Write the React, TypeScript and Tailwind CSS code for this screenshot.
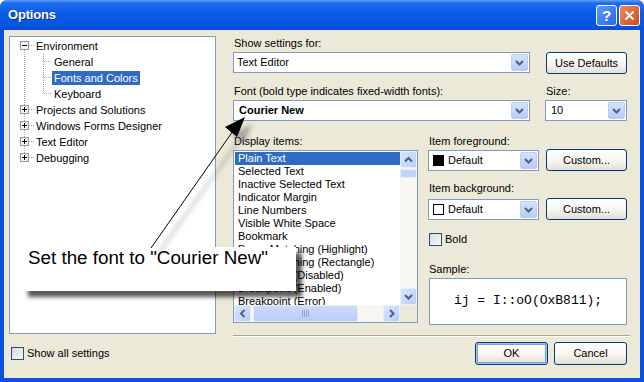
import type { ReactNode } from "react";

const items = [
  "Plain Text",
  "Selected Text",
  "Inactive Selected Text",
  "Indicator Margin",
  "Line Numbers",
  "Visible White Space",
  "Bookmark",
  "Brace Matching (Highlight)",
  "Brace Matching (Rectangle)",
  "Breakpoint (Disabled)",
  "Breakpoint (Enabled)",
  "Breakpoint (Error)",
];

// dotted tree connectors + expand box, one per row
function TreeLines({ kind, first, last, open }: { kind: "root" | "child"; first?: boolean; last?: boolean; open?: boolean }) {
  if (kind === "root") {
    return (
      <svg width="25" height="16" className="shrink-0">
        {!first && <line x1="14.5" y1="0" x2="14.5" y2="3" stroke="#A0A0A0" strokeDasharray="1 1" />}
        {!last && <line x1="14.5" y1="12" x2="14.5" y2="16" stroke="#A0A0A0" strokeDasharray="1 1" />}
        <line x1="19" y1="7.5" x2="25" y2="7.5" stroke="#A0A0A0" strokeDasharray="1 1" />
        <rect x="10.5" y="3.5" width="8" height="8" fill="#F4F4F0" stroke="#919B9C" />
        <line x1="12" y1="7.5" x2="17" y2="7.5" stroke="#000" />
        {!open && <line x1="14.5" y1="5" x2="14.5" y2="10" stroke="#000" />}
      </svg>
    );
  }
  return (
    <svg width="42" height="16" className="shrink-0">
      <line x1="14.5" y1="0" x2="14.5" y2="16" stroke="#A0A0A0" strokeDasharray="1 1" />
      <line x1="33.5" y1="0" x2="33.5" y2={last ? 8 : 16} stroke="#A0A0A0" strokeDasharray="1 1" />
      <line x1="34" y1="7.5" x2="42" y2="7.5" stroke="#A0A0A0" strokeDasharray="1 1" />
    </svg>
  );
}

function DropBtn() {
  return (
    <div className="w-[17px] h-[17px] mr-px shrink-0 rounded-[2px] border border-[#BCCDF7] bg-[linear-gradient(to_bottom,#D6E3FE,#B7CBF7)] flex items-center justify-center">
      <svg width="9" height="6" viewBox="0 0 9 6">
        <path d="M1 1l3.5 3.5L8 1" fill="none" stroke="#4D6185" strokeWidth="2" />
      </svg>
    </div>
  );
}

function Combo({ className, children }: { className: string; children: ReactNode }) {
  return (
    <div className={`h-[21px] border border-[#7F9DB9] bg-white flex items-center ${className}`}>
      <div className="flex-1 flex items-center pl-[3px] min-w-0">{children}</div>
      <DropBtn />
    </div>
  );
}

function XpButton({ className, def, children }: { className: string; def?: boolean; children: ReactNode }) {
  return (
    <div
      className={`h-[22px] rounded-[3px] border border-[#003C74] bg-[linear-gradient(to_bottom,#FFFFFF_0%,#F6F5F0_55%,#E2E0D5_100%)] flex items-center justify-center ${
        def ? "shadow-[inset_0_0_0_1px_#A7C1F1,inset_0_0_0_2px_#7D9FE2]" : ""
      } ${className}`}
    >
      {children}
    </div>
  );
}

function CheckBox() {
  return <div className="w-[13px] h-[13px] shrink-0 border border-[#1C5180] bg-[linear-gradient(135deg,#DCDBD5,#F7F7F4)]" />;
}

function Arrow({ dir }: { dir: "up" | "down" | "left" | "right" }) {
  const d = {
    up: "M1 5.5L4.5 2L8 5.5",
    down: "M1 2L4.5 5.5L8 2",
    left: "M5.5 1L2 4.5L5.5 8",
    right: "M2 1L5.5 4.5L2 8",
  }[dir];
  const wide = dir === "up" || dir === "down";
  return (
    <div className="w-[17px] h-[17px] shrink-0 rounded-[2px] border border-[#E8EEFC] bg-[linear-gradient(135deg,#D9E5FE,#B9CDF8)] flex items-center justify-center">
      <svg width={wide ? 9 : 8} height={wide ? 8 : 9} viewBox={wide ? "0 0 9 8" : "0 0 8 9"}>
        <path d={d} fill="none" stroke="#4D6185" strokeWidth="2" />
      </svg>
    </div>
  );
}

export default function App() {
  return (
    <div className="relative w-[644px] h-[382px] overflow-hidden rounded-t-[7px] bg-[#0A52DD] flex flex-col text-[11px] text-black font-['Liberation_Sans',Arial,sans-serif]">
      {/* title bar */}
      <div className="h-[30px] shrink-0 flex items-center pl-[8px] pr-[4px] bg-[linear-gradient(to_bottom,#5CA2FA_0%,#1F6CEE_10%,#0A5BE6_45%,#0655E2_85%,#0A4CD2_100%)]">
        <span className="text-white font-bold text-[13px] tracking-[-0.2px] [text-shadow:1px_1px_0_#0A2E8C]">Options</span>
        <div className="ml-auto flex gap-[2px]">
          <div className="w-[21px] h-[21px] rounded-[3px] border border-white bg-[linear-gradient(135deg,#5B9CF8,#2A66E4)] flex items-center justify-center text-white font-bold text-[15px] leading-none">
            ?
          </div>
          <div className="w-[21px] h-[21px] rounded-[3px] border border-white bg-[linear-gradient(135deg,#E98B63,#D3481E)] flex items-center justify-center">
            <svg width="11" height="11" viewBox="0 0 11 11">
              <path d="M1.5 1.5l8 8M9.5 1.5l-8 8" stroke="#fff" strokeWidth="2" />
            </svg>
          </div>
        </div>
      </div>

      {/* client area */}
      <div className="flex-1 mx-[4px] mb-[4px] bg-[#ECE9D8] flex flex-col">
        <div className="flex pt-[6px] pl-[5px]">
          {/* tree */}
          <div className="w-[207px] h-[298px] border border-[#7F9DB9] bg-white pt-px">
            <div className="flex items-center h-[16px]">
              <TreeLines kind="root" first open />
              <span className="pl-px">Environment</span>
            </div>
            <div className="flex items-center h-[16px]">
              <TreeLines kind="child" />
              <span className="px-[2px] h-[14px] leading-[14px]">General</span>
            </div>
            <div className="flex items-center h-[16px]">
              <TreeLines kind="child" />
              <span className="px-[2px] h-[14px] leading-[14px] bg-[#316AC5] text-white">Fonts and Colors</span>
            </div>
            <div className="flex items-center h-[16px]">
              <TreeLines kind="child" last />
              <span className="px-[2px] h-[14px] leading-[14px]">Keyboard</span>
            </div>
            {["Projects and Solutions", "Windows Forms Designer", "Text Editor", "Debugging"].map((t, i) => (
              <div key={t} className="flex items-center h-[16px]">
                <TreeLines kind="root" last={i === 3} />
                <span className="pl-px">{t}</span>
              </div>
            ))}
          </div>

          {/* settings */}
          <div className="ml-[17px] w-[397px] flex flex-col">
            <div className="mt-px h-[13px] leading-[13px] pl-px">Show settings for:</div>
            <div className="mt-[2px] flex items-start">
              <Combo className="w-[297px]">
                <span>Text Editor</span>
              </Combo>
              <XpButton className="ml-[16px] w-[81px]">Use Defaults</XpButton>
            </div>

            <div className="mt-[11px] flex">
              <div className="w-[297px]">
                <div className="h-[13px] leading-[13px] pl-px">Font (bold type indicates fixed-width fonts):</div>
                <Combo className="mt-[2px] w-[297px]">
                  <span className="pl-[2px] font-bold">Courier New</span>
                </Combo>
              </div>
              <div className="ml-[15px] w-[82px]">
                <div className="h-[13px] leading-[13px] pl-px">Size:</div>
                <Combo className="mt-[2px] w-[82px]">
                  <span className="pl-[2px]">10</span>
                </Combo>
              </div>
            </div>

            <div className="mt-[14px] flex items-start">
              {/* display items */}
              <div className="w-[185px]">
                <div className="h-[13px] leading-[13px] pl-px">Display items:</div>
                <div className="mt-[2px] h-[173px] border border-[#7F9DB9] bg-white flex flex-col">
                  <div className="flex h-[154px]">
                    <div className="w-[166px] overflow-hidden pt-px">
                      {items.map((t, i) => (
                        <div
                          key={t}
                          className={`h-[13px] leading-[13px] pl-[3px] ml-px whitespace-nowrap ${i === 0 ? "bg-[#316AC5] text-white" : ""}`}
                        >
                          {t}
                        </div>
                      ))}
                    </div>
                    <div className="w-[17px] flex flex-col bg-[#F7F6F1]">
                      <Arrow dir="up" />
                      <div className="mt-px h-[9px] rounded-[2px] border border-[#E8EEFC] bg-[#C3D4FB]" />
                      <div className="flex-1" />
                      <Arrow dir="down" />
                    </div>
                  </div>
                  <div className="flex h-[17px]">
                    <div className="w-[166px] flex bg-[#F7F6F1]">
                      <Arrow dir="left" />
                      <div className="ml-[2px] w-[105px] rounded-[2px] border border-[#E8EEFC] bg-[linear-gradient(to_bottom,#CCDBFC,#B8CCF8)] flex items-center justify-center">
                        <svg width="8" height="7">
                          <path d="M0.5 0v7M2.5 0v7M4.5 0v7M6.5 0v7" stroke="#8CA6DC" />
                        </svg>
                      </div>
                      <div className="flex-1" />
                      <Arrow dir="right" />
                    </div>
                    <div className="w-[17px] bg-[#ECE9D8]" />
                  </div>
                </div>
              </div>

              {/* colours and sample */}
              <div className="ml-[10px] w-[199px] flex flex-col">
                <div className="h-[13px] leading-[13px] pl-px">Item foreground:</div>
                <div className="mt-px flex items-start">
                  <Combo className="mt-px w-[111px]">
                    <div className="w-[11px] h-[11px] ml-px bg-black" />
                    <span className="ml-[4px]">Default</span>
                  </Combo>
                  <XpButton className="ml-[7px] w-[81px]">Custom...</XpButton>
                </div>
                <div className="mt-[11px] h-[13px] leading-[13px] pl-px">Item background:</div>
                <div className="mt-[3px] flex items-start">
                  <Combo className="mt-px w-[111px]">
                    <div className="w-[11px] h-[11px] ml-px border border-black bg-white" />
                    <span className="ml-[4px]">Default</span>
                  </Combo>
                  <XpButton className="ml-[7px] w-[81px]">Custom...</XpButton>
                </div>
                <div className="mt-[11px] flex items-center ml-px">
                  <CheckBox />
                  <span className="ml-[3px]">Bold</span>
                </div>
                <div className="mt-[15px] h-[13px] leading-[13px] pl-px">Sample:</div>
                <div className="mt-[2px] ml-px h-[47px] border border-[#7F9DB9] bg-white flex items-center justify-center font-['Liberation_Mono','Courier_New',monospace] text-[13px] whitespace-pre">
                  ij = I::oO(OxB811);
                </div>
              </div>
            </div>

            <div className="mt-[10px] h-px bg-[#ACA899]" />
            <div className="h-px bg-white" />
          </div>
        </div>

        {/* bottom */}
        <div className="mt-[5px] flex items-center pl-[7px] pr-[13px]">
          <CheckBox />
          <span className="ml-[3px]">Show all settings</span>
          <XpButton def className="ml-auto w-[73px] h-[23px]">OK</XpButton>
          <XpButton className="ml-[6px] w-[73px] h-[23px]">Cancel</XpButton>
        </div>
      </div>

      {/* callout */}
      <div className="absolute left-[22px] top-[247px] w-[274px] h-[44px] bg-white shadow-[6px_6px_4px_rgba(0,0,0,0.65)] pl-[6px] text-[18.8px] leading-[22px] font-['Liberation_Sans',Arial,sans-serif]">
        Set the font to "Courier New"
      </div>
      <svg className="absolute left-0 top-0 pointer-events-none" width="644" height="382">
        <defs>
          <filter id="soft" x="-20%" y="-20%" width="140%" height="140%">
            <feGaussianBlur stdDeviation="2.5" />
          </filter>
        </defs>
        <g filter="url(#soft)" opacity="0.45">
          <line x1="158" y1="254" x2="240" y2="139" stroke="#555" strokeWidth="2" />
          <polygon points="252,124 232,134 244,144" fill="#555" />
        </g>
        <line x1="151" y1="248" x2="233" y2="131" stroke="#000" strokeWidth="1" />
        <polygon points="245,117 225,127 237,137" fill="#000" />
      </svg>
    </div>
  );
}
